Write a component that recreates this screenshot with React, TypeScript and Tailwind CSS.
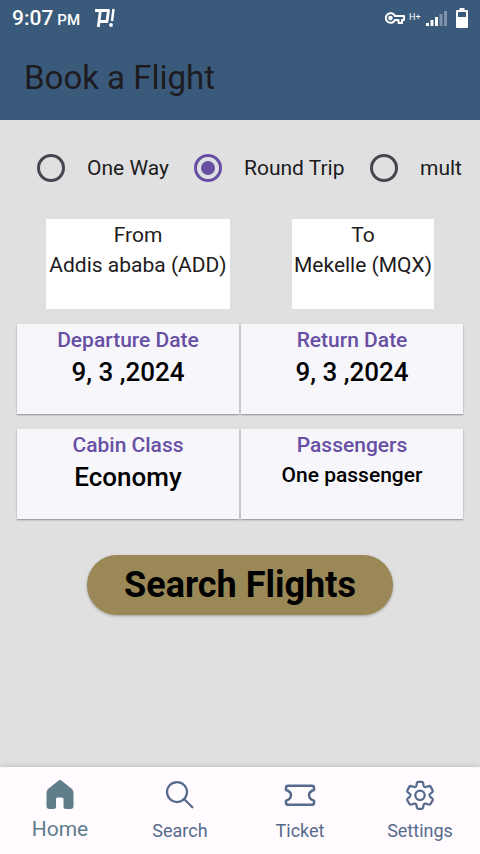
import { useState } from "react";
import type { ReactNode } from "react";

const trips = [
  { id: "one", label: "One Way" },
  { id: "round", label: "Round Trip" },
  { id: "multi", label: "mult" },
];

function StatusBar() {
  return (
    <div className="flex h-9 items-center justify-between px-3 text-white">
      <div className="flex items-center">
        <p className="flex items-baseline gap-1 font-medium">
          <span className="text-[21px] leading-9">9:07</span>
          <span className="text-[15px]">PM</span>
        </p>
        <svg className="ml-3 h-5 w-6" viewBox="0 0 24 20" fill="none" stroke="currentColor" aria-hidden="true">
          <path d="M3 2.500H16.500L15 13.500H7M8.300 3 6.300 19" strokeWidth="2.800" strokeLinejoin="round" />
          <path d="M21.500 1 20 13" strokeWidth="2.500" />
          <circle cx="19" cy="17" r="1.900" fill="currentColor" stroke="none" />
        </svg>
      </div>
      <div className="flex items-center">
        <svg className="h-3 w-5" viewBox="0 0 20 12" fill="none" stroke="currentColor" strokeWidth="2" aria-hidden="true">
          <path d="M10 4A4.800 4.800 0 1 0 10 8h3.500v3h3.500V8h2V4z" strokeLinejoin="round" />
          <circle cx="5.500" cy="6" r="1.300" />
        </svg>
        <span className="ml-1 w-4 text-[9px]">H+</span>
        <svg className="ml-px h-4 w-[22px]" viewBox="0 0 22 16" fill="currentColor" aria-hidden="true">
          <path d="M0 13h3v3H0zM4.500 10h3v6h-3zM9 7h3v9H9z" />
          <path d="M13.500 4h3v12h-3zM18 1h3v15h-3z" opacity=".35" />
        </svg>
        <svg className="ml-2 h-5 w-3" viewBox="0 0 12 20" aria-hidden="true">
          <path d="M3.500 0h5v2H11q1 0 1 1v16q0 1-1 1H1q-1 0-1-1V3q0-1 1-1h2.500zM2 4v5h8V4z" fill="currentColor" fillRule="evenodd" />
        </svg>
      </div>
    </div>
  );
}

function Card({ title, value, small }: { title: string; value: string; small?: boolean }) {
  return (
    <button
      type="button"
      className="flex h-[90px] flex-1 flex-col items-center bg-[#f7f6fb] pt-px font-medium shadow-[0_1px_2px_rgba(0,0,0,0.22),0_1px_1px_rgba(0,0,0,0.14)]"
    >
      <span className="text-[21px] leading-[30px] text-[#6750a4]">{title}</span>
      <span className={small ? "text-[21px] leading-[30px] text-black" : "text-[26px] leading-[34px] text-black"}>{value}</span>
    </button>
  );
}

function NavItem({ label, active, children }: { label: string; active?: boolean; children: ReactNode }) {
  return (
    <a
      href="#"
      aria-current={active ? "page" : undefined}
      className={
        active
          ? "flex flex-1 flex-col items-center pt-3 text-[21px] leading-9 text-[#607d8b]"
          : "flex flex-1 flex-col items-center pt-3 text-[18px] leading-10 text-[#566a8b]"
      }
    >
      <svg className="h-8 w-9" viewBox="0 0 36 32" fill="none" stroke="currentColor" strokeWidth="2.250" strokeLinejoin="round" aria-hidden="true">
        {children}
      </svg>
      <span>{label}</span>
    </a>
  );
}

export default function App() {
  const [trip, setTrip] = useState("round");
  return (
    <div className="flex min-h-screen flex-col bg-[#e0e0e0] font-['Roboto',sans-serif] text-[#1d1b20]">
      <header className="bg-[#3a5a7b] pb-[14px]">
        <StatusBar />
        <h1 className="px-6 pt-[13px] text-[33px] leading-[57px]">Book a Flight</h1>
      </header>

      <main className="flex flex-1 flex-col px-[17px]">
        <div role="radiogroup" aria-label="Trip type" className="mt-3 grid h-[72px] grid-cols-[157px_176px_1fr] items-center">
          {trips.map((t) => (
            <label key={t.id} className="flex items-center text-[21px] leading-[30px]">
              <span className="flex w-[70px] shrink-0 justify-center pr-[2px]">
                <input
                  type="radio"
                  name="trip"
                  checked={trip === t.id}
                  onChange={() => setTrip(t.id)}
                  className="flex size-7 appearance-none items-center justify-center rounded-full border-3 border-[#49454f] before:size-[14px] before:rounded-full checked:border-[#6750a4] checked:before:bg-[#6750a4]"
                />
              </span>
              {t.label}
            </label>
          ))}
        </div>

        <div className="mt-[15px] flex justify-between px-[29px] text-[21px] leading-[30px]">
          <button type="button" className="flex h-[90px] w-[184px] flex-col items-center bg-white pt-px">
            <span>From</span>
            <span>Addis ababa (ADD)</span>
          </button>
          <button type="button" className="flex h-[90px] w-[142px] flex-col items-center bg-white pt-px">
            <span>To</span>
            <span>Mekelle (MQX)</span>
          </button>
        </div>

        <div className="mt-[15px] flex gap-0.5">
          <Card title="Departure Date" value="9, 3 ,2024" />
          <Card title="Return Date" value="9, 3 ,2024" />
        </div>
        <div className="mt-[15px] flex gap-0.5">
          <Card title="Cabin Class" value="Economy" />
          <Card title="Passengers" value="One passenger" small />
        </div>

        <button
          type="button"
          className="mt-9 h-[60px] self-center rounded-full bg-[#9a8857] px-[37px] text-[36px] font-bold leading-[60px] text-black shadow-[0_1px_3px_rgba(0,0,0,0.3)]"
        >
          Search Flights
        </button>
      </main>

      <nav className="flex h-[87px] bg-[#fffbff] shadow-[0_0_6px_rgba(0,0,0,0.18)]">
        <NavItem label="Home" active>
          <path d="M16 2 6 10Q4.500 11.500 4.500 13.500V27Q4.500 30 7.500 30H11.500Q14 30 14 27.500V20Q14 18.500 15.500 18.500H20Q21.500 18.500 21.500 20V27.500Q21.500 30 24 30H28.500Q31.500 30 31.500 27V13.500Q31.500 11.500 30 10L20 2Q18 0 16 2Z" fill="currentColor" stroke="none" />
        </NavItem>
        <NavItem label="Search">
          <circle cx="15" cy="13" r="10" />
          <path d="m22.300 20.300 8 8" strokeLinecap="round" />
        </NavItem>
        <NavItem label="Ticket">
          <path d="M6 6.800H30Q32 6.800 32 8.800V11Q27 12.500 27 16.300T32 21.600V23.800Q32 25.800 30 25.800H6Q4 25.800 4 23.800V21.600Q9 20.100 9 16.300T4 11V8.800Q4 6.800 6 6.800Z" strokeWidth="2.500" />
        </NavItem>
        <NavItem label="Settings">
          <circle cx="18" cy="16.300" r="4.700" />
          <path d="M16.300 2.800H19.700Q20.900 2.800 21.100 4L21.600 6.800Q22 8.300 23.500 8L26.800 7.100Q28 6.700 28.700 7.900L30.600 11.200Q31.200 12.300 30.300 13.100L28 15Q26.900 16.300 28 17.600L30.300 19.500Q31.200 20.300 30.600 21.400L28.700 24.700Q28 25.900 26.800 25.500L23.500 24.600Q22 24.300 21.600 25.800L21.100 28.600Q20.900 29.800 19.700 29.800H16.300Q15.100 29.800 14.900 28.600L14.400 25.800Q14 24.300 12.500 24.600L9.200 25.500Q8 25.900 7.300 24.700L5.400 21.400Q4.800 20.300 5.700 19.500L8 17.600Q9.100 16.300 8 15L5.700 13.100Q4.800 12.300 5.400 11.200L7.300 7.900Q8 6.700 9.200 7.100L12.500 8Q14 8.300 14.400 6.800L14.900 4Q15.100 2.800 16.300 2.800Z" />
        </NavItem>
      </nav>
    </div>
  );
}
